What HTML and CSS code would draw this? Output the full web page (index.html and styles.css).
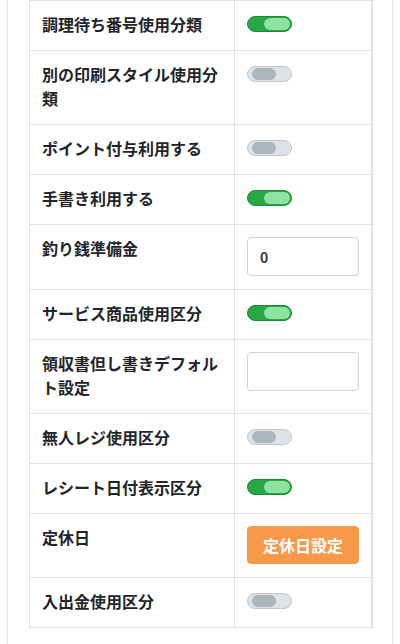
FILE: index.html
```html
<!DOCTYPE html>
<html lang="ja">
<head>
<meta charset="utf-8">
<link rel="stylesheet" href="styles.css">
</head>
<body>
<div class="card">
  <table class="settings">
    <tr><th>調理待ち番号使用分類</th><td><span class="toggle on"><span class="knob"></span></span></td></tr>
    <tr><th>別の印刷スタイル使用分類</th><td><span class="toggle"><span class="knob"></span></span></td></tr>
    <tr><th>ポイント付与利用する</th><td><span class="toggle"><span class="knob"></span></span></td></tr>
    <tr><th>手書き利用する</th><td><span class="toggle on"><span class="knob"></span></span></td></tr>
    <tr><th>釣り銭準備金</th><td><input class="field" type="text" value="0"></td></tr>
    <tr><th>サービス商品使用区分</th><td><span class="toggle on"><span class="knob"></span></span></td></tr>
    <tr><th>領収書但し書きデフォルト設定</th><td><input class="field" type="text" value=""></td></tr>
    <tr><th>無人レジ使用区分</th><td><span class="toggle"><span class="knob"></span></span></td></tr>
    <tr><th>レシート日付表示区分</th><td><span class="toggle on"><span class="knob"></span></span></td></tr>
    <tr><th>定休日</th><td><button class="btn" type="button">定休日設定</button></td></tr>
    <tr><th>入出金使用区分</th><td><span class="toggle"><span class="knob"></span></span></td></tr>
  </table>
</div>
</body>
</html>
```
FILE: styles.css
```css
html, body {
  margin: 0;
  padding: 0;
  background: #ffffff;
}
body {
  font-family: "Noto Sans CJK JP", "Noto Sans", sans-serif;
  color: #212529;
  overflow: hidden;
}
.card {
  margin: 0 7px;
  border: 1px solid #e6e6e6;
  border-top: none;
  padding: 0 19px 40px 21px;
  min-height: 700px;
}
.settings {
  width: 344px;
  border-collapse: collapse;
  table-layout: fixed;
  border: 1px solid #dee2e6;
  border-right-width: 2px;
}
.settings th,
.settings td {
  border: 1px solid #dee2e6;
  padding: 12px 12px 13px 12px;
  vertical-align: top;
  font-size: 16px;
  line-height: 24px;
  text-align: left;
}
.settings th {
  width: 180px;
  font-weight: 700;
  padding-top: 11px;
  padding-bottom: 14px;
}
.settings td {
  width: auto;
}
.toggle {
  display: block;
  box-sizing: border-box;
  width: 45px;
  height: 16px;
  margin-top: 3px;
  border-radius: 8px;
  border: 1px solid #c3c8cd;
  background: #dfe2e6;
  position: relative;
}
.toggle .knob {
  position: absolute;
  left: 4px;
  top: 1px;
  width: 24px;
  height: 12px;
  border-radius: 6px;
  background: #adb5bd;
}
.toggle.on {
  background: #28a745;
  border-color: #1e8a38;
}
.toggle.on .knob {
  left: auto;
  right: 1px;
  width: 26px;
  background: #8de39f;
}
.field {
  display: block;
  box-sizing: border-box;
  width: 112px;
  height: 39px;
  margin: 0;
  border: 1px solid #ced4da;
  border-radius: 4px;
  padding: 0 12px;
  font-family: "Noto Sans CJK JP", "Noto Sans", sans-serif;
  font-size: 14px;
  font-weight: 700;
  color: #343a40;
  background: #fff;
}
.btn {
  display: block;
  box-sizing: border-box;
  width: 112px;
  height: 38px;
  margin: 0;
  border: 1px solid #f8994a;
  border-radius: 4px;
  background: #f8994a;
  color: #ffffff;
  font-family: "Noto Sans CJK JP", "Noto Sans", sans-serif;
  font-size: 16px;
  font-weight: 700;
  padding: 0;
}
```
